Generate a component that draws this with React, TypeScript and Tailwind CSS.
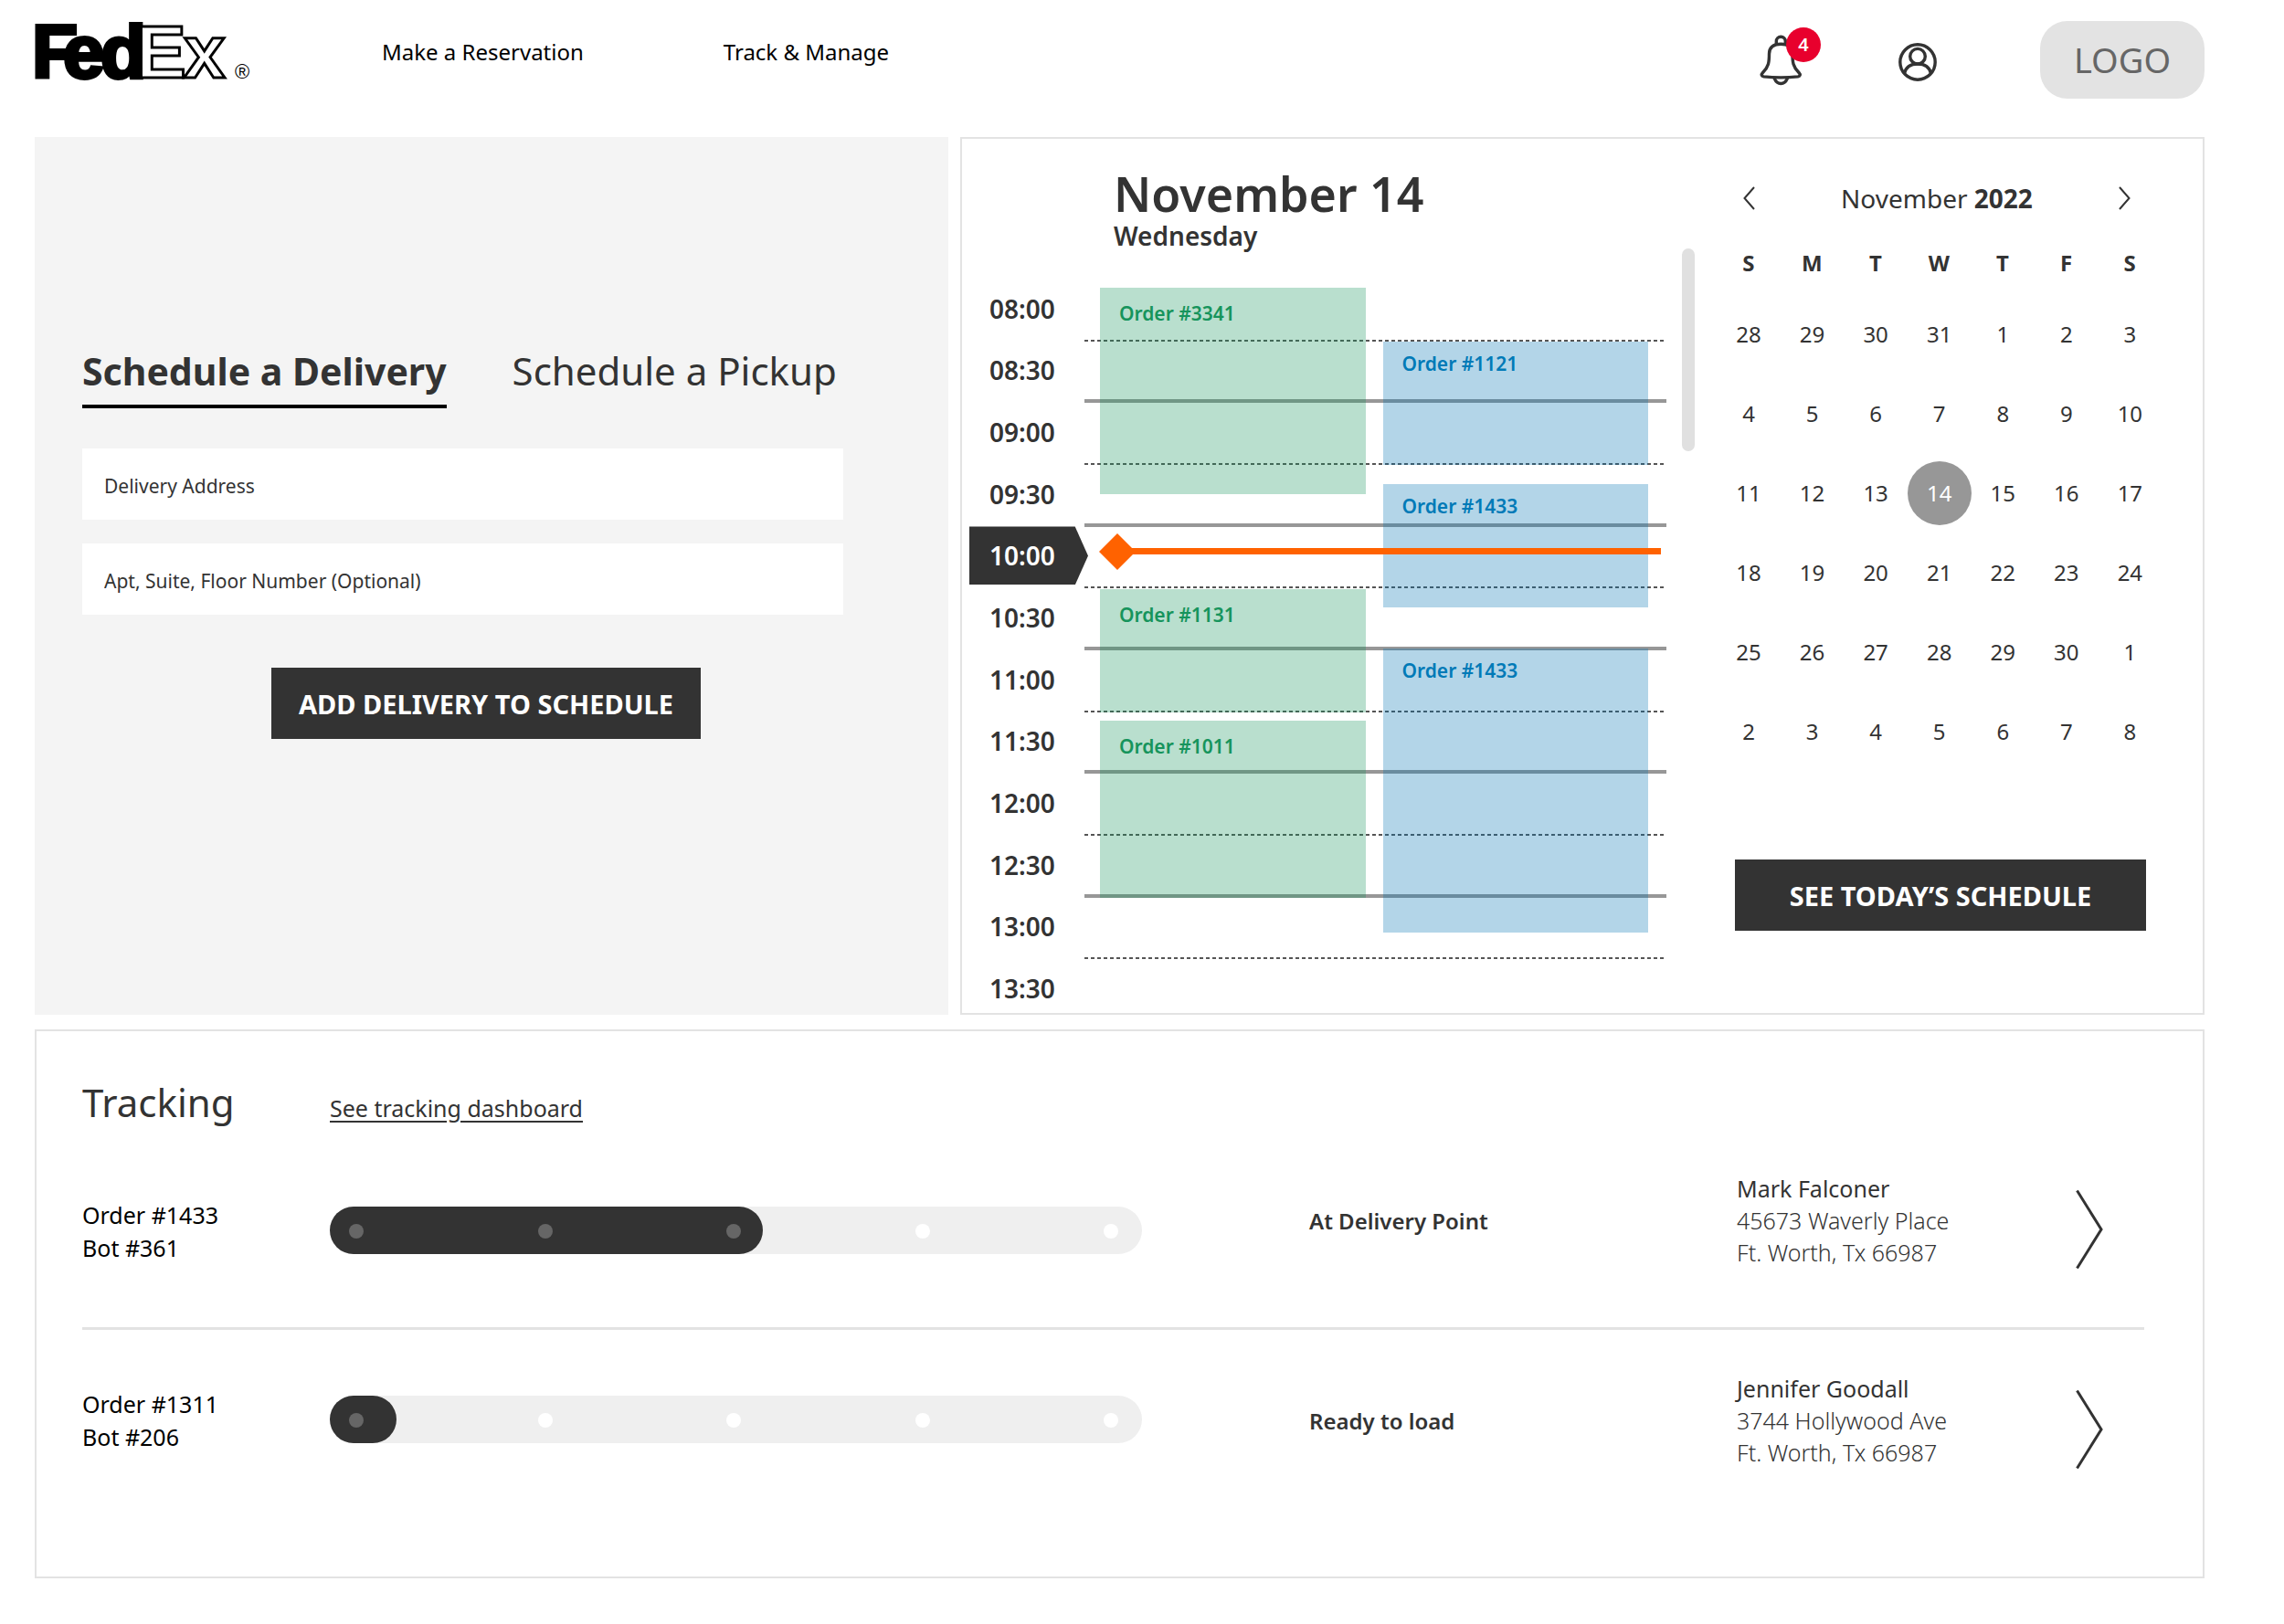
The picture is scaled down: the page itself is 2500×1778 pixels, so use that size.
import { useState } from 'react';

interface CalendarEvent {
    id: string;
    label: string;
    start: number;
    end: number;
}

interface Shipment {
    order: string;
    bot: string;
    step: number;
    status: string;
    name: string;
    street: string;
    city: string;
}

const TIMES = ['08:00', '08:30', '09:00', '09:30', '10:00', '10:30', '11:00', '11:30', '12:00', '12:30', '13:00', '13:30'];
const CURRENT_TIME = '10:00';

// Minutes counted from the top edge of the timeline
const TIMELINE_MINUTES = 360;
const NOW = 133;

const DELIVERIES: CalendarEvent[] = [
    { id: 'd1', label: 'Order #3341', start: 5, end: 105 },
    { id: 'd2', label: 'Order #1131', start: 151, end: 211 },
    { id: 'd3', label: 'Order #1011', start: 215, end: 301 },
];

const PICKUPS: CalendarEvent[] = [
    { id: 'p1', label: 'Order #1121', start: 31, end: 91 },
    { id: 'p2', label: 'Order #1433', start: 100, end: 160 },
    { id: 'p3', label: 'Order #1433', start: 180, end: 318 },
];

const WEEKDAYS = ['S', 'M', 'T', 'W', 'T', 'F', 'S'];
const WEEKS = [
    [28, 29, 30, 31, 1, 2, 3],
    [4, 5, 6, 7, 8, 9, 10],
    [11, 12, 13, 14, 15, 16, 17],
    [18, 19, 20, 21, 22, 23, 24],
    [25, 26, 27, 28, 29, 30, 1],
    [2, 3, 4, 5, 6, 7, 8],
];

const SHIPMENTS: Shipment[] = [
    {
        order: 'Order #1433',
        bot: 'Bot #361',
        step: 3,
        status: 'At Delivery Point',
        name: 'Mark Falconer',
        street: '45673 Waverly Place',
        city: 'Ft. Worth, Tx 66987',
    },
    {
        order: 'Order #1311',
        bot: 'Bot #206',
        step: 1,
        status: 'Ready to load',
        name: 'Jennifer Goodall',
        street: '3744 Hollywood Ave',
        city: 'Ft. Worth, Tx 66987',
    },
];

const toPercent = (minutes: number) => `${(minutes / TIMELINE_MINUTES) * 100}%`;

function FedExLogo() {
    return (
        <svg width="250" height="96" viewBox="-6 -14 250 96" role="img" aria-label="FedEx" fontFamily="'Liberation Sans', Arial, sans-serif" fontWeight="700" fontSize="82" stroke="#000">
            <text x="-3 31 72" y="62" fill="#000" strokeWidth="4">
                Fed
            </text>
            <text x="111 163" y="62" fill="#fff" strokeWidth="3">
                Ex
            </text>
            <text x="219" y="63" fill="#000" stroke="none" fontSize="22" fontWeight="400">
                ®
            </text>
        </svg>
    );
}

function BellIcon() {
    return (
        <svg width="50" height="60" viewBox="0 0 50 60" fill="none" stroke="#333" strokeWidth="3.4" strokeLinecap="round" strokeLinejoin="round">
            <path d="M19.3 12.6V9.2a5 5 0 0 1 10 0v3.4" />
            <path d="M24.3 12.3C15.5 12.3 11.5 16 11.5 23c0 9-.5 14-7 20.500c-2 2.200-1.500 4 1 4.400c12 1.300 25.500 1.300 37.500 0c2.500-.4 3-2.200 1-4.400c-6.500-6.500-7-11.500-7-20.500c0-7-4-10.700-12.700-10.700Z" />
            <path d="M17.300 50.200c1.500 3.500 4 5.300 7 5.300s5.500-1.800 7-5.300" />
        </svg>
    );
}

function UserIcon() {
    return (
        <svg width="42" height="42" viewBox="0 0 42 42" fill="none" stroke="#333" strokeWidth="3.4">
            <circle cx="21" cy="21" r="19.200" />
            <circle cx="21" cy="14.700" r="8.300" />
            <path d="M6.500 33.500C8 26.500 13.500 23 21 23s13 3.500 14.500 10.500" />
        </svg>
    );
}

function Header() {
    return (
        <header className="flex h-[150px] items-start justify-between pt-[23px]">
            <div className="flex h-[68px] items-center">
                <a href="#" className="-ml-1.5">
                    <FedExLogo />
                </a>
                <nav className="ml-[136px] flex gap-[153px] text-2xl leading-9 text-black">
                    <a href="#reserve">Make a Reservation</a>
                    <a href="#track">Track &amp; Manage</a>
                </nav>
            </div>
            <div className="flex h-[85px] items-center">
                <button type="button" aria-label="Notifications" className="relative">
                    <BellIcon />
                    <span className="absolute -top-1.5 left-[30px] flex h-[38px] w-[38px] items-center justify-center rounded-full bg-[#e8002d] text-xl font-semibold text-white">4</span>
                </button>
                <button type="button" aria-label="Account" className="mt-1 ml-[103px]">
                    <UserIcon />
                </button>
                <div className="ml-[113px] flex h-[85px] w-[180px] items-center justify-center rounded-[30px] bg-[#e3e3e3] text-[38px] text-[#666]">LOGO</div>
            </div>
        </header>
    );
}

function ScheduleForm() {
    const [tab, setTab] = useState<'delivery' | 'pickup'>('delivery');

    const tabClass = (active: boolean) =>
        active ? 'border-b-4 border-black pb-[13px] text-[41px] font-bold' : 'border-b-4 border-transparent pb-[13px] text-[42px]';

    return (
        <section className="bg-[#f4f4f4] pt-[232px] pr-[115px] pl-[52px]">
            <div role="tablist" className="flex gap-[72px] leading-[48px] whitespace-nowrap">
                <button type="button" role="tab" aria-selected={tab === 'delivery'} onClick={() => setTab('delivery')} className={tabClass(tab === 'delivery')}>
                    Schedule a Delivery
                </button>
                <button type="button" role="tab" aria-selected={tab === 'pickup'} onClick={() => setTab('pickup')} className={tabClass(tab === 'pickup')}>
                    Schedule a Pickup
                </button>
            </div>
            <form className="mt-11 flex flex-col" onSubmit={(e) => e.preventDefault()}>
                <input
                    type="text"
                    aria-label="Delivery Address"
                    placeholder="Delivery Address"
                    className="h-[78px] bg-white px-6 pt-1 text-[21px] placeholder:text-[#333]"
                />
                <input
                    type="text"
                    aria-label="Apt, Suite, Floor Number (Optional)"
                    placeholder="Apt, Suite, Floor Number (Optional)"
                    className="mt-[26px] h-[78px] bg-white px-6 pt-1 text-[21px] placeholder:text-[#333]"
                />
                <button type="submit" className="mt-[58px] ml-[207px] h-[78px] w-[470px] bg-[#333] pt-0.5 text-[29px] font-bold text-white">
                    ADD DELIVERY TO SCHEDULE
                </button>
            </form>
        </section>
    );
}

function EventColumn({ events, color }: { events: CalendarEvent[]; color: 'green' | 'blue' }) {
    return (
        <div className="relative">
            {events.map((event) => (
                <div
                    key={event.id}
                    className={
                        color === 'green'
                            ? 'absolute inset-x-0 bg-[#16945c]/30 px-[21px] pt-[14px] text-[21px] leading-7 font-semibold text-[#16945c]'
                            : 'absolute inset-x-0 bg-[#0273b2]/30 px-[21px] pt-[10px] text-[21px] leading-7 font-semibold text-[#007ab7]'
                    }
                    style={{ top: toPercent(event.start), height: toPercent(event.end - event.start) }}
                >
                    {event.label}
                </div>
            ))}
        </div>
    );
}

function Timeline() {
    return (
        <div className="min-w-0 flex-1 pt-[30px]">
            <div className="pl-[166px]">
                <h2 className="text-[52px] leading-[60px] font-semibold">November 14</h2>
                <p className="text-[28px] leading-8 font-semibold">Wednesday</p>
            </div>
            <div className="mt-[30px] h-[805px] overflow-hidden">
                <div className="flex h-[812px]">
                    <div className="grid w-[134px] grid-rows-12 text-[28px] font-semibold">
                        {TIMES.map((time) =>
                            time === CURRENT_TIME ? (
                                <div key={time} className="z-10 ml-2 flex h-16 w-[130px] items-center self-center bg-[#333] pl-[22px] text-white [clip-path:polygon(0_0,89%_0,100%_50%,89%_100%,0_100%)]">
                                    {time}
                                </div>
                            ) : (
                                <div key={time} className="flex items-center pl-[30px]">
                                    {time}
                                </div>
                            )
                        )}
                    </div>
                    <div className="relative grid flex-1 grid-rows-12">
                        {TIMES.map((time, i) => (
                            <div key={time} className="flex flex-col justify-end">
                                {i % 2 === 0 ? (
                                    <div className="-mb-[2px] h-[2px] bg-[repeating-linear-gradient(90deg,#555_0_4px,transparent_4px_7px)]" />
                                ) : (
                                    <div className="-mb-[2px] h-1 bg-[#979797]" />
                                )}
                            </div>
                        ))}
                        <div className="absolute inset-0 grid grid-cols-2 gap-[19px] pr-5 pl-[17px]">
                            <EventColumn events={DELIVERIES} color="green" />
                            <EventColumn events={PICKUPS} color="blue" />
                        </div>
                        {/* Current time marker */}
                        <div className="absolute right-[6px] left-4 flex h-10 -translate-y-1/2 items-center" style={{ top: toPercent(NOW) }}>
                            <div className="h-10 w-10 bg-[#ff6200] [clip-path:polygon(50%_0,100%_50%,50%_100%,0_50%)]" />
                            <div className="-ml-2 h-[7px] flex-1 bg-[#ff6200]" />
                        </div>
                    </div>
                </div>
            </div>
        </div>
    );
}

function MonthCalendar() {
    const [selected, setSelected] = useState('2-3');

    return (
        <div className="ml-6 w-[487px] pt-[47px]">
            <div className="flex items-center justify-between pr-[34px] pl-[29px] text-[28px] leading-9">
                <button type="button" aria-label="Previous month">
                    <svg width="13" height="26" viewBox="0 0 13 26" fill="none" stroke="#333" strokeWidth="2">
                        <path d="M12 1 1.500 13 12 25" />
                    </svg>
                </button>
                <div>
                    November <b>2022</b>
                </div>
                <button type="button" aria-label="Next month">
                    <svg width="13" height="26" viewBox="0 0 13 26" fill="none" stroke="#333" strokeWidth="2">
                        <path d="M1 1 11.500 13 1 25" />
                    </svg>
                </button>
            </div>
            <table className="mt-[37px] w-full table-fixed text-center text-2xl">
                <thead>
                    <tr>
                        {WEEKDAYS.map((day, i) => (
                            <th key={i} className="h-[50px] p-0 align-top font-bold">
                                {day}
                            </th>
                        ))}
                    </tr>
                </thead>
                <tbody>
                    {WEEKS.map((week, w) => (
                        <tr key={w}>
                            {week.map((day, d) => {
                                const key = `${w}-${d}`;
                                return (
                                    <td key={key} className="h-[87px] p-0">
                                        <button
                                            type="button"
                                            onClick={() => setSelected(key)}
                                            className={key === selected ? 'size-[70px] rounded-full bg-[#979797] align-middle text-white' : 'size-[70px] align-middle'}
                                        >
                                            {day}
                                        </button>
                                    </td>
                                );
                            })}
                        </tr>
                    ))}
                </tbody>
            </table>
            <div className="mt-[97px] pr-[17px] pl-5">
                <button type="button" className="h-[78px] w-full bg-[#333] pt-0.5 text-[29px] font-bold text-white">
                    SEE TODAY’S SCHEDULE
                </button>
            </div>
        </div>
    );
}

function ProgressBar({ step }: { step: number }) {
    return (
        <div className="relative flex h-[52px] items-center rounded-full bg-[#efefef]">
            <div className={step === 3 ? 'absolute inset-y-0 left-0 w-[53.3%] rounded-full bg-[#333]' : 'absolute inset-y-0 left-0 w-[8.2%] rounded-full bg-[#333]'} />
            <div className="relative flex w-full justify-between pt-0.5 pr-[26px] pl-[21px]">
                {[1, 2, 3, 4, 5].map((n) => (
                    <span key={n} className={n <= step ? 'size-4 rounded-full bg-[#666]' : 'size-4 rounded-full bg-white'} />
                ))}
            </div>
        </div>
    );
}

function Tracking() {
    return (
        <section className="mt-4 border-2 border-[#e3e3e3] pt-[50px] pr-16 pb-[117px] pl-[50px] text-[25px]">
            <div className="grid grid-cols-[271fr_1986fr] items-baseline">
                <h2 className="text-[42px] leading-[56px]">Tracking</h2>
                <a href="#dashboard" className="justify-self-start underline underline-offset-4">
                    See tracking dashboard
                </a>
            </div>
            {SHIPMENTS.map((s, i) => (
                <div
                    key={s.order}
                    className={
                        i === 0
                            ? 'mt-[49px] grid grid-cols-[1343fr_468fr_373fr_73fr] items-start border-b-3 border-[#e3e3e3] pb-[63px]'
                            : 'mt-[47px] grid grid-cols-[1343fr_468fr_373fr_73fr] items-start'
                    }
                >
                    <div className={i === 0 ? 'grid grid-cols-[271fr_889fr_183fr] pt-7' : 'grid grid-cols-[271fr_889fr_183fr] pt-4'}>
                        <div className="leading-9 text-black">
                            <p>{s.order}</p>
                            <p>{s.bot}</p>
                        </div>
                        <div className="pt-[9px]">
                            <ProgressBar step={s.step} />
                        </div>
                    </div>
                    <p className="pt-[35px] text-2xl leading-[35px] font-semibold">{s.status}</p>
                    <address className="leading-[35px] font-light not-italic">
                        <p className="font-normal">{s.name}</p>
                        <p>{s.street}</p>
                        <p>{s.city}</p>
                    </address>
                    <button type="button" aria-label={`Open ${s.order}`} className="mt-[18px] -ml-0.5 justify-self-start">
                        <svg width="30" height="88" viewBox="0 0 30 88" fill="none" stroke="#333" strokeWidth="3">
                            <path d="M1.500 1.500 28 44 1.500 86.500" />
                        </svg>
                    </button>
                </div>
            ))}
        </section>
    );
}

export default function App() {
    return (
        <div className="min-h-screen bg-white pr-[87px] pb-[51px] pl-[38px] font-['Noto_Sans','Open_Sans',sans-serif] text-[#333]">
            <Header />
            <main>
                <div className="grid grid-cols-[1000fr_1362fr] gap-[13px]">
                    <ScheduleForm />
                    <section className="flex min-w-0 border-2 border-[#e3e3e3] pr-[45px]">
                        <Timeline />
                        <div className="mt-[120px] ml-[17px] h-[222px] w-[14px] rounded-full bg-[#e0e0e0]" />
                        <MonthCalendar />
                    </section>
                </div>
                <Tracking />
            </main>
        </div>
    );
}
